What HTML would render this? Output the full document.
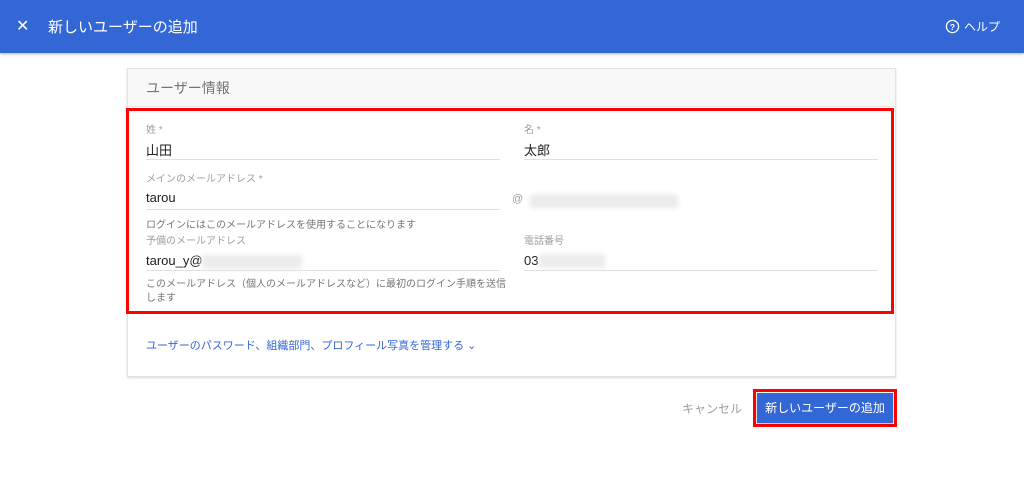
<!DOCTYPE html>
<html><head><meta charset="utf-8"><style>
*{margin:0;padding:0;box-sizing:border-box}
body{width:1024px;height:493px;background:#fff;font-family:"Liberation Sans","Noto Sans CJK JP",sans-serif;position:relative;overflow:hidden;color:#212121}
.a{position:absolute;white-space:nowrap}
.hdr{left:0;top:0;width:1024px;height:53px;background:#3367d6;box-shadow:0 1px 3px rgba(0,0,0,.3)}
.lbl{font-size:10px;color:#9e9e9e}
.val{font-size:13px;color:#212121}
.ln{height:1px;background:#e0e0e0}
.hint{font-size:10px;color:#757575}
.blur{background:#ececec;filter:blur(2px);height:14px}
</style></head><body>
<div class="a hdr"></div>
<div class="a" style="left:16px;top:16px;color:#fff;font-size:16px">✕</div>
<div class="a" style="left:48px;top:16px;color:#fff;font-size:15px">新しいユーザーの追加</div>
<svg class="a" style="left:945px;top:19px" width="15" height="15" viewBox="0 0 16 16"><circle cx="8" cy="8" r="6.5" fill="none" stroke="#fff" stroke-width="1.4"/><text x="8" y="11.5" font-size="9" fill="#fff" text-anchor="middle" font-family="Liberation Sans" font-weight="bold">?</text></svg>
<div class="a" style="left:964px;top:18px;color:#fff;font-size:12px">ヘルプ</div>

<div class="a" style="left:127px;top:68px;width:769px;height:309px;border:1px solid #e3e3e3;box-shadow:0 1px 2px rgba(0,0,0,.15);background:#fff"></div>
<div class="a" style="left:128px;top:69px;width:767px;height:38px;background:#f8f8f8;border-bottom:1px solid #e6e6e6"></div>
<div class="a" style="left:146px;top:78px;font-size:14px;color:#757575">ユーザー情報</div>
<div class="a" style="left:126px;top:108px;width:768px;height:206px;border:3px solid #f00"></div>

<div class="a lbl" style="left:146px;top:121px">姓 *</div>
<div class="a val" style="left:146px;top:140px">山田</div>
<div class="a ln" style="left:146px;top:159px;width:354px"></div>
<div class="a lbl" style="left:524px;top:121px">名 *</div>
<div class="a val" style="left:524px;top:140px">太郎</div>
<div class="a ln" style="left:524px;top:159px;width:354px"></div>

<div class="a lbl" style="left:146px;top:170px">メインのメールアドレス *</div>
<div class="a val" style="left:146px;top:190px">tarou</div>
<div class="a ln" style="left:146px;top:209px;width:354px"></div>
<div class="a" style="left:512px;top:193px;font-size:11px;color:#9e9e9e">@</div>
<div class="a blur" style="left:530px;top:194px;width:148px"></div>
<div class="a hint" style="left:146px;top:216px">ログインにはこのメールアドレスを使用することになります</div>
<div class="a lbl" style="left:146px;top:232px">予備のメールアドレス</div>
<div class="a val" style="left:146px;top:253px">tarou_y@</div>
<div class="a blur" style="left:202px;top:255px;width:100px"></div>
<div class="a ln" style="left:146px;top:270px;width:354px"></div>
<div class="a lbl" style="left:524px;top:232px">電話番号</div>
<div class="a val" style="left:524px;top:253px">03</div>
<div class="a blur" style="left:539px;top:254px;width:66px"></div>
<div class="a ln" style="left:524px;top:270px;width:354px"></div>
<div class="a hint" style="left:146px;top:278px;line-height:14px;white-space:normal;width:362px">このメールアドレス（個人のメールアドレスなど）に最初のログイン手順を送信します</div>

<div class="a" style="left:146px;top:337px;font-size:11px;color:#3367d6">ユーザーのパスワード、組織部門、プロフィール写真を管理する ⌄</div>

<div class="a" style="left:682px;top:400px;font-size:12px;color:#9e9e9e">キャンセル</div>
<div class="a" style="left:753px;top:389px;width:144px;height:38px;border:3px solid #f00"></div>
<div class="a" style="left:757px;top:393px;width:136px;height:30px;background:#3367d6;box-shadow:0 1px 2px rgba(0,0,0,.3);color:#fff;font-size:12px;text-align:center;line-height:30px">新しいユーザーの追加</div>
</body></html>
